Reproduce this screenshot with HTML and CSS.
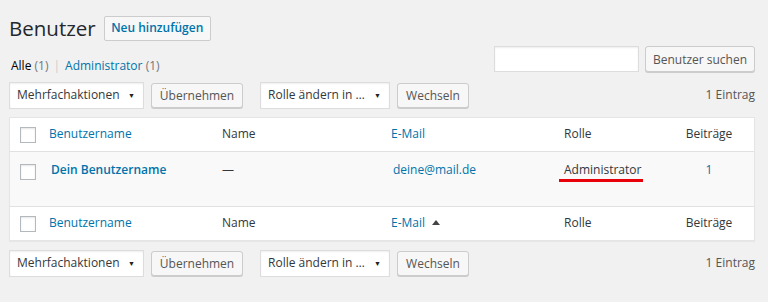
FILE: index.html
```html
<!DOCTYPE html>
<html lang="de">
<head>
  <meta charset="UTF-8">
  <meta name="viewport" content="width=device-width, initial-scale=1.0">
  <title>Benutzer</title>
  <link rel="stylesheet" href="styles.css">
</head>
<body>
  <div class="wrap">
    <!-- Titel -->
    <div class="title-row">
      <h1>Benutzer</h1>
      <a class="title-action" href="#">Neu hinzufügen</a>
    </div>

    <!-- Filter und Suche -->
    <div class="filter-row">
      <ul class="views">
        <li class="current">Alle <span class="count">(1)</span></li>
        <li class="sep">|</li>
        <li><a href="#">Administrator</a> <span class="count">(1)</span></li>
      </ul>
      <div class="search-box">
        <input type="text" class="search-input">
        <button class="button search-btn">Benutzer suchen</button>
      </div>
    </div>

    <div class="tablenav">
      <div class="actions">
        <div class="select wide">Mehrfachaktionen <span class="arrow">▼</span></div>
        <button class="button apply-btn">Übernehmen</button>
      </div>
      <div class="actions">
        <div class="select">Rolle ändern in … <span class="arrow">▼</span></div>
        <button class="button change-btn">Wechseln</button>
      </div>
      <div class="num-items">1 Eintrag</div>
    </div>

    <table class="users">
      <colgroup>
        <col class="col-cb">
        <col class="col-user">
        <col class="col-name">
        <col class="col-email">
        <col class="col-role">
        <col class="col-posts">
      </colgroup>
      <thead>
        <tr>
          <th class="cb"><span class="checkbox"></span></th>
          <th><a href="#">Benutzername</a></th>
          <th>Name</th>
          <th><a href="#">E-Mail</a></th>
          <th>Rolle</th>
          <th class="num">Beiträge</th>
        </tr>
      </thead>
      <tbody>
        <tr>
          <td class="cb"><span class="checkbox"></span></td>
          <td class="username"><a href="#">Dein Benutzername</a></td>
          <td>—</td>
          <td class="email"><a href="#">deine@mail.de</a></td>
          <td><span class="role">Administrator</span></td>
          <td class="num"><a href="#">1</a></td>
        </tr>
      </tbody>
      <tfoot>
        <tr>
          <th class="cb"><span class="checkbox"></span></th>
          <th><a href="#">Benutzername</a></th>
          <th>Name</th>
          <th><a href="#">E-Mail</a> <span class="sort-up"></span></th>
          <th>Rolle</th>
          <th class="num">Beiträge</th>
        </tr>
      </tfoot>
    </table>

    <div class="tablenav bottom">
      <div class="actions">
        <div class="select wide">Mehrfachaktionen <span class="arrow">▼</span></div>
        <button class="button apply-btn">Übernehmen</button>
      </div>
      <div class="actions">
        <div class="select">Rolle ändern in … <span class="arrow">▼</span></div>
        <button class="button change-btn">Wechseln</button>
      </div>
      <div class="num-items">1 Eintrag</div>
    </div>
  </div>
</body>
</html>
```

FILE: styles.css
```css
/* Grundlayout */
body {
  margin: 0;
  background-color: #f1f1f1;
  color: #32373c;
  font-family: 'Open Sans', 'Noto Sans', sans-serif;
  font-size: 12px;
  line-height: 1.4;
}

a {
  color: #0073aa;
  text-decoration: none;
}

.wrap {
  padding: 16px 13px 0 9px;
}

.title-row {
  display: flex;
  align-items: center;
  height: 25px;
}

.title-row h1 {
  margin: 0 8px 0 0;
  font-size: 20.5px;
  font-weight: 400;
  line-height: 25px;
  color: #23282d;
}

.title-action {
  display: inline-flex;
  align-items: center;
  justify-content: center;
  width: 107px;
  height: 25px;
  box-sizing: border-box;
  border: 1px solid #ccc;
  border-radius: 2px;
  background: #f7f7f7;
  font-weight: 600;
  white-space: nowrap;
}

.filter-row {
  display: flex;
  justify-content: space-between;
  height: 26px;
  margin-top: 5px;
}

.views {
  display: flex;
  gap: 5px;
  margin: 11px 0 0 2px;
  padding: 0;
  list-style: none;
  line-height: 18px;
}

.views .current {
  color: #000;
}

.views .count {
  color: #72777c;
}

.views .sep {
  color: #ccc;
}

.search-box {
  display: flex;
  gap: 6px;
}

.search-input {
  width: 145px;
  height: 26px;
  box-sizing: border-box;
  margin: 0;
  border: 1px solid #ddd;
  box-shadow: inset 0 1px 2px rgba(0, 0, 0, 0.07);
  background: #fff;
}

.button {
  height: 26px;
  box-sizing: border-box;
  padding: 0;
  margin: 0;
  border: 1px solid #ccc;
  border-radius: 3px;
  background: #f7f7f7;
  box-shadow: 0 1px 0 #ccc;
  color: #555;
  font-family: inherit;
  font-size: 12px;
  text-align: center;
  white-space: nowrap;
}

.search-btn {
  width: 110px;
}

/* Tabellennavigation */
.tablenav {
  display: flex;
  align-items: center;
  margin-top: 10px;
  height: 27px;
}

.tablenav.bottom {
  margin-top: 9px;
}

.actions {
  display: flex;
  align-items: center;
  gap: 7px;
  margin-right: 17px;
}

.select {
  display: flex;
  align-items: center;
  justify-content: space-between;
  width: 130px;
  height: 27px;
  box-sizing: border-box;
  padding: 0 8px 0 7px;
  border: 1px solid #ddd;
  background: #fff;
  box-shadow: inset 0 1px 2px rgba(0, 0, 0, 0.07);
  color: #32373c;
  white-space: nowrap;
}

.select.wide {
  width: 135px;
}

.select .arrow {
  font-size: 7px;
  color: #222;
}

.actions .button {
  height: 25px;
}

.apply-btn {
  width: 92px;
}

.change-btn {
  width: 72px;
}

.num-items {
  margin-left: auto;
  color: #555;
}

/* Tabelle */
.users {
  width: 100%;
  margin-top: 8px;
  border: 1px solid #e5e5e5;
  border-spacing: 0;
  table-layout: fixed;
  background: #fff;
  box-shadow: 0 1px 1px rgba(0, 0, 0, 0.04);
}

.col-cb { width: 29px; }
.col-user { width: 173px; }
.col-name { width: 169px; }
.col-email { width: 173px; }
.col-role { width: 110px; }
.col-posts { width: 90px; }

.users th,
.users td {
  padding: 0 10px;
  text-align: left;
  font-weight: 400;
  vertical-align: middle;
  color: #32373c;
}

.users thead th {
  height: 33px;
  border-bottom: 1px solid #e1e1e1;
}

.users tfoot th {
  height: 33px;
  border-top: 1px solid #e1e1e1;
}

.users tbody td {
  height: 54px;
  padding-top: 10px;
  box-sizing: border-box;
  vertical-align: top;
  background: #f9f9f9;
}

.users .cb {
  padding-left: 10px;
  padding-right: 0;
}

.users tbody .cb {
  padding-top: 12px;
}

.users .num {
  text-align: center;
  padding-left: 0;
  padding-right: 0;
}

.checkbox {
  display: block;
  width: 16px;
  height: 16px;
  box-sizing: border-box;
  border: 1px solid #b4b9be;
  background: #fff;
  box-shadow: inset 0 1px 2px rgba(0, 0, 0, 0.1);
}

.users .username {
  padding-left: 12px;
}

.users .username a {
  font-weight: 600;
}

.users .email {
  padding-left: 12px;
}

.role {
  position: relative;
}

/* rote Markierung unter der Rolle */
.role::after {
  content: '';
  position: absolute;
  left: -5px;
  right: -2px;
  bottom: -4px;
  height: 3px;
  background: #e8000b;
}

.sort-up {
  display: inline-block;
  margin-left: 4px;
  vertical-align: 2px;
  border-left: 4px solid transparent;
  border-right: 4px solid transparent;
  border-bottom: 5px solid #444;
}
```
